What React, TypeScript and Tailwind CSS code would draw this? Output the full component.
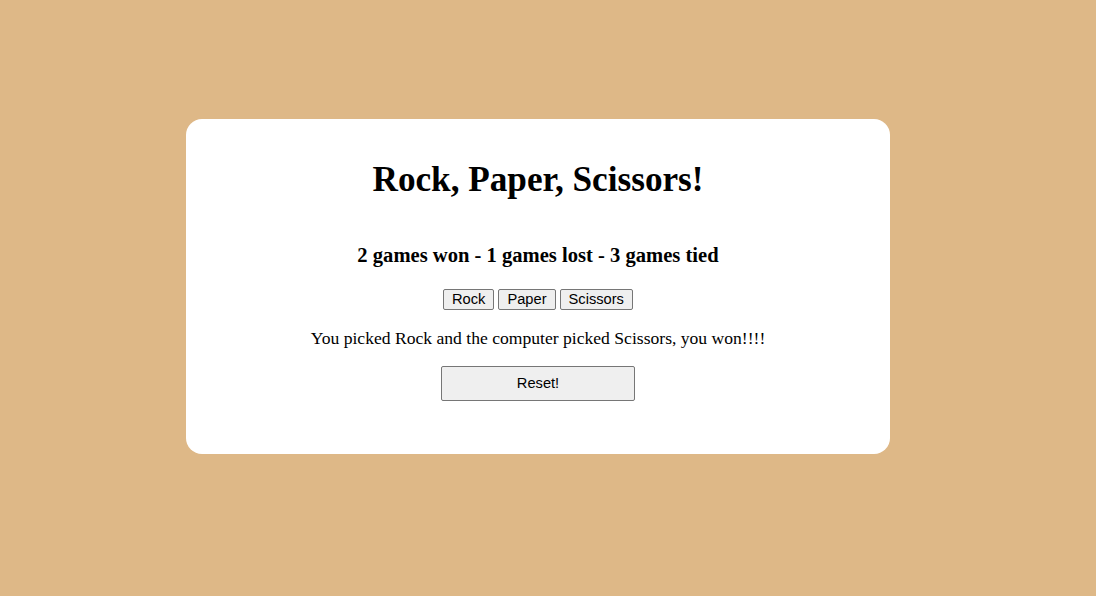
import React from 'react';

type Choice = 'Rock' | 'Paper' | 'Scissors';

const choices: Choice[] = ['Rock', 'Paper', 'Scissors'];

const btn =
  "border border-[#767676] rounded-[2px] bg-[#efefef] text-black text-[14.67px] font-['Liberation_Sans',Arial,sans-serif] leading-none";

export default function App() {
  const [score, setScore] = React.useState({ won: 2, lost: 1, tied: 3 });
  const [message, setMessage] = React.useState(
    'You picked Rock and the computer picked Scissors, you won!!!!'
  );

  const play = (pick: Choice) => {
    const comp = choices[Math.floor(Math.random() * 3)];
    const beats: Record<Choice, Choice> = { Rock: 'Scissors', Paper: 'Rock', Scissors: 'Paper' };
    if (pick === comp) {
      setScore(s => ({ ...s, tied: s.tied + 1 }));
      setMessage(`You picked ${pick} and the computer picked ${comp}, you tied.`);
    } else if (beats[pick] === comp) {
      setScore(s => ({ ...s, won: s.won + 1 }));
      setMessage(`You picked ${pick} and the computer picked ${comp}, you won!!!!`);
    } else {
      setScore(s => ({ ...s, lost: s.lost + 1 }));
      setMessage(`You picked ${pick} and the computer picked ${comp}, you lost.`);
    }
  };

  const reset = () => {
    setScore({ won: 0, lost: 0, tied: 0 });
    setMessage('');
  };

  return (
    <div className="min-h-screen w-full bg-[#deb887] flex items-center justify-center pr-[20px] pb-[23px] font-['Liberation_Serif','Times_New_Roman',serif] text-black">
      <div className="w-[704px] bg-white rounded-[16px] text-center pb-[53px]">
        <h1 className="mt-[41px] text-[35.2px] leading-[40px] font-bold">Rock, Paper, Scissors!</h1>
        <h3 className="mt-[43px] text-[20.59px] leading-[24px] font-bold">
          {score.won} games won - {score.lost} games lost - {score.tied} games tied
        </h3>
        <div className="mt-[22px] flex justify-center gap-[4px]">
          {choices.map(c => (
            <button key={c} onClick={() => play(c)} className={`${btn} h-[21px] px-[8px]`}>
              {c}
            </button>
          ))}
        </div>
        <p className="mt-[18px] text-[17.6px] leading-[20px] h-[20px]">{message}</p>
        <button onClick={reset} className={`${btn} mt-[18px] w-[194px] h-[35px]`}>
          Reset!
        </button>
      </div>
    </div>
  );
}
